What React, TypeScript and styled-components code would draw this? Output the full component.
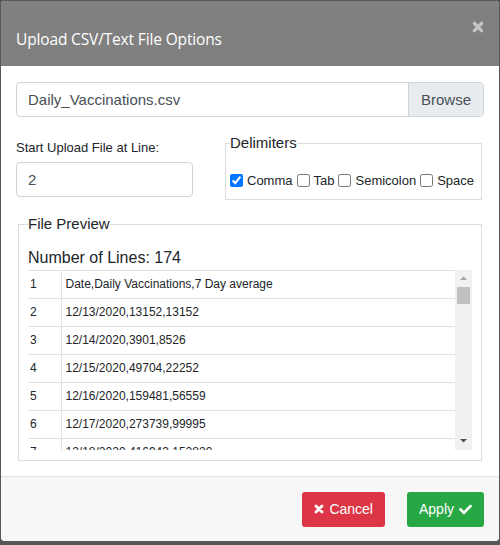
import React from "react";
import styled, { createGlobalStyle } from "styled-components";
import { FaCheck } from "react-icons/fa";

const GlobalStyle = createGlobalStyle`
  html, body {
    margin: 0;
    padding: 0;
    background: #575757;
  }
  body {
    font-family: "Liberation Sans", Arial, sans-serif;
    color: #212529;
  }
  * {
    box-sizing: border-box;
  }
`;

const Modal = styled.div`
  margin: 1px 0 0 1px;
  width: 498px;
  height: 540px;
  background: #fff;
  border-radius: 4px;
  overflow: hidden;
  display: flex;
  flex-direction: column;
`;

const Header = styled.div`
  height: 65px;
  flex-shrink: 0;
  background: #808080;
  padding: 0 15px;
  display: flex;
  align-items: flex-start;
  justify-content: space-between;
`;

const Title = styled.h5`
  margin: 26px 0 0;
  font-family: "Open Sans", "Noto Sans", sans-serif;
  font-weight: 400;
  font-size: 15.5px;
  letter-spacing: -0.15px;
  line-height: 24px;
  color: #fff;
`;

const CloseButton = styled.button`
  border: none;
  background: none;
  padding: 0;
  margin: 20px 0 0 0;
  width: 12px;
  height: 12px;
  display: flex;
  align-items: center;
  justify-content: center;
  cursor: pointer;
`;

const Body = styled.div`
  flex: 1;
  padding: 16px 15px 0;
  display: flex;
  flex-direction: column;
`;

const FileGroup = styled.div`
  display: flex;
  height: 35px;
  border: 1px solid #ced4da;
  border-radius: 4px;
  overflow: hidden;
`;

const FileName = styled.div`
  flex: 1;
  padding: 0 11px;
  display: flex;
  align-items: center;
  font-size: 15px;
  color: #495057;
`;

const BrowseButton = styled.div`
  width: 75px;
  background: #e9ecef;
  border-left: 1px solid #ced4da;
  display: flex;
  align-items: center;
  justify-content: center;
  font-size: 15px;
  color: #495057;
`;

const OptionsRow = styled.div`
  display: flex;
  margin-top: 15px;
`;

const LineColumn = styled.div`
  width: 177px;
  padding-top: 6px;
`;

const FieldLabel = styled.label`
  display: block;
  font-size: 13px;
  line-height: 19.5px;
  margin-bottom: 4.5px;
`;

const LineInput = styled.div`
  height: 35px;
  border: 1px solid #ced4da;
  border-radius: 4px;
  padding: 0 11px;
  display: flex;
  align-items: center;
  font-size: 15px;
  color: #495057;
`;

const Group = styled.fieldset<{ $pad: number }>`
  margin: 0 2px 0 ${(p) => (p.$pad === 4 ? "32px" : "2px")};
  padding: 0 ${(p) => p.$pad}px ${(p) => (p.$pad === 4 ? 9 : 10)}px;
  border: 1px solid #dcdcdc;
  min-width: 0;
  flex: 1;
`;

const Legend = styled.legend`
  padding: 0;
  font-size: 15px;
  line-height: 22.5px;
  color: #212529;
`;

const CheckRow = styled.div`
  margin-top: 15.5px;
  height: 20px;
  display: flex;
  align-items: center;
  font-size: 13px;
`;

const CheckItem = styled.label`
  display: inline-flex;
  align-items: center;
  margin-right: 4px;

  input {
    margin: 0 4px 0 0;
    width: 13px;
    height: 13px;
  }
`;

const PreviewGroup = styled(Group)`
  margin-top: 13px;
  flex: none;
`;

const LineCount = styled.div`
  margin-top: 10px;
  font-size: 16px;
  line-height: 24px;
`;

const ScrollFrame = styled.div`
  height: 180px;
  display: flex;
`;

const Viewport = styled.div`
  flex: 1;
  overflow-y: auto;
  scrollbar-width: none;
`;

const ScrollTrack = styled.div`
  width: 17px;
  background: #f1f1f1;
  display: flex;
  flex-direction: column;
`;

const ScrollArrow = styled.div`
  height: 17px;
  display: flex;
  align-items: center;
  justify-content: center;
`;

const ScrollThumb = styled.div`
  height: 17px;
  margin: 0 2px;
  background: #c1c1c1;
`;

const Spacer = styled.div`
  flex: 1;
`;

const Table = styled.table`
  width: 100%;
  border-collapse: collapse;
  font-size: 12px;
`;

const Cell = styled.td<{ $num?: boolean }>`
  border-top: 1px solid #dee2e6;
  border-right: ${(p) => (p.$num ? "1px solid #dee2e6" : "none")};
  width: ${(p) => (p.$num ? "33px" : "auto")};
  height: 28px;
  padding: 0 4px 0 ${(p) => (p.$num ? "2px" : "4px")};
  line-height: 14px;
  vertical-align: middle;
  white-space: nowrap;
`;

const Footer = styled.div`
  height: 65px;
  flex-shrink: 0;
  border-top: 1px solid #e3e3e3;
  background: #f7f7f7;
  display: flex;
  align-items: center;
  justify-content: flex-end;
  gap: 22px;
  padding: 0 15px;
`;

const ActionButton = styled.button<{ $tone: "danger" | "success" }>`
  height: 35px;
  padding: 0 12px;
  border: none;
  border-radius: 3px;
  background: ${(p) => (p.$tone === "danger" ? "#dc3545" : "#28a745")};
  color: #fff;
  font-family: "Liberation Sans", Arial, sans-serif;
  font-size: 14px;
  display: flex;
  align-items: center;
  gap: 5px;
  cursor: pointer;
`;

const TimesIcon = ({ size, color }: { size: number; color: string }) => (
  <svg width={size} height={size} viewBox="0 0 10 10">
    <path
      d="M2 2 L8 8 M8 2 L2 8"
      stroke={color}
      strokeWidth={2.8}
      strokeLinecap="round"
    />
  </svg>
);

const Arrow = ({ up }: { up?: boolean }) => (
  <svg width="7" height="4" viewBox="0 0 7 4">
    <path
      d={up ? "M0 4 L3.5 0.5 L7 4 Z" : "M0 0 L3.5 3.5 L7 0 Z"}
      fill={up ? "#a3a3a3" : "#505050"}
    />
  </svg>
);

const pad = (n: number) => (n < 10 ? "0" + n : "" + n);

const buildRows = () => {
  const daily = [13152, 3901, 49704, 159481, 273739, 416943];
  const rows: string[] = ["Date,Daily Vaccinations,7 Day average"];
  const start = new Date(2020, 11, 13);
  let seed = 7;
  for (let i = 0; i < 173; i++) {
    if (i >= daily.length) {
      seed = (seed * 9301 + 49297) % 233280;
      const base = 450000 + i * 9000;
      daily.push(Math.round(base + (seed / 233280) * 200000));
    }
    const win = daily.slice(Math.max(0, i - 6), i + 1);
    const avg = Math.floor(win.reduce((a, b) => a + b, 0) / win.length);
    const d = new Date(start.getTime() + i * 86400000);
    const date = `${pad(d.getMonth() + 1)}/${pad(d.getDate())}/${d.getFullYear()}`;
    rows.push(`${date},${daily[i]},${avg}`);
  }
  return rows;
};

const rows = buildRows();

const delimiters = [
  { name: "Comma", checked: true },
  { name: "Tab", checked: false },
  { name: "Semicolon", checked: false },
  { name: "Space", checked: false },
];

export default function App() {
  return (
    <>
      <GlobalStyle />
      <Modal>
        <Header>
          <Title>Upload CSV/Text File Options</Title>
          <CloseButton aria-label="Close">
            <TimesIcon size={12} color="#c6c6c6" />
          </CloseButton>
        </Header>
        <Body>
          <FileGroup>
            <FileName>Daily_Vaccinations.csv</FileName>
            <BrowseButton>Browse</BrowseButton>
          </FileGroup>
          <OptionsRow>
            <LineColumn>
              <FieldLabel>Start Upload File at Line:</FieldLabel>
              <LineInput>2</LineInput>
            </LineColumn>
            <Group $pad={4}>
              <Legend>Delimiters</Legend>
              <CheckRow>
                {delimiters.map((d) => (
                  <CheckItem key={d.name}>
                    <input type="checkbox" defaultChecked={d.checked} />
                    {d.name}
                  </CheckItem>
                ))}
              </CheckRow>
            </Group>
          </OptionsRow>
          <PreviewGroup $pad={9}>
            <Legend>File Preview</Legend>
            <LineCount>Number of Lines: 174</LineCount>
            <ScrollFrame>
              <Viewport>
                <Table>
                  <tbody>
                    {rows.map((r, i) => (
                      <tr key={i}>
                        <Cell $num>{i + 1}</Cell>
                        <Cell>{r}</Cell>
                      </tr>
                    ))}
                  </tbody>
                </Table>
              </Viewport>
              <ScrollTrack>
                <ScrollArrow>
                  <Arrow up />
                </ScrollArrow>
                <ScrollThumb />
                <Spacer />
                <ScrollArrow>
                  <Arrow />
                </ScrollArrow>
              </ScrollTrack>
            </ScrollFrame>
          </PreviewGroup>
        </Body>
        <Footer>
          <ActionButton $tone="danger">
            <TimesIcon size={10} color="#fff" />
            Cancel
          </ActionButton>
          <ActionButton $tone="success">
            Apply
            <FaCheck size={13} />
          </ActionButton>
        </Footer>
      </Modal>
    </>
  );
}
